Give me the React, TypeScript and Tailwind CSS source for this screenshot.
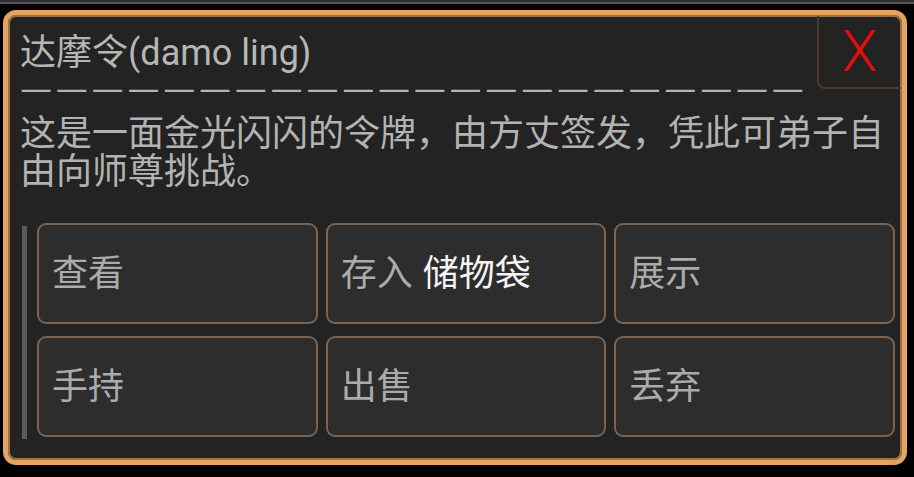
import React from "react";

type Action = { label: string; extra?: string };

const actions: Action[] = [
  { label: "查看" },
  { label: "存入", extra: "储物袋" },
  { label: "展示" },
  { label: "手持" },
  { label: "出售" },
  { label: "丢弃" },
];

const ItemButton = ({ action }: { action: Action }) => (
  <button className="h-[101px] flex items-center px-[13px] bg-[#2d2d2d] border-2 border-[#7b6351] rounded-[9px] text-[36px] leading-none text-[#ababab] text-left">
    <span>{action.label}</span>
    {action.extra && <span className="ml-[10px] text-[#f4f4f4]">{action.extra}</span>}
  </button>
);

const App = () => {
  return (
    <div
      className="w-[914px] h-[477px] bg-black flex flex-col overflow-hidden"
      style={{ fontFamily: 'Roboto, "Noto Sans CJK SC", sans-serif' }}
    >
      {/* status strip at the very top */}
      <div className="h-[2px] bg-[#2e2e2e]" />
      <div className="h-[2px] bg-[#555555]" />

      <div className="ml-[3px] mt-[6px] w-[904px] h-[455px] rounded-[13px] border-[5px] border-[#e2a45f] bg-[#232323] shadow-[inset_0_0_0_2px_#9a7148] relative">
        {/* close button */}
        <button className="absolute top-[1px] right-[1px] w-[84px] h-[73px] border-l-2 border-b-2 border-[#4b3b2e] rounded-bl-[8px] flex items-center justify-center text-[#e30f0f] text-[58px] font-light leading-none pb-[2px]">
          X
        </button>

        <div className="pl-[12px] pt-[16px] pr-[11px]">
          <h1 className="text-[36px] leading-[44px] text-[#b6b6b6] font-normal">
            达摩令(damo ling)
          </h1>
          {/* separator row: each dash kept in its own box so the font can't merge them */}
          <div
            className="flex text-[36px] leading-[24px] text-[#b3b3b3] -mt-[2px]"
            style={{ fontFamily: '"Noto Sans CJK SC", sans-serif' }}
          >
            {Array.from({ length: 22 }).map((_, i) => (
              <span key={i} className="inline-block w-[35.8px] shrink-0">
                —
              </span>
            ))}
          </div>
          <p className="mt-[18px] text-[36px] leading-[38px] text-[#b3b3b3] pr-[6px]">
            这是一面金光闪闪的令牌，由方丈签发，凭此可弟子自由向师尊挑战。
          </p>
        </div>

        <div className="flex mt-[32px] pl-[14px] pr-[7px]">
          <div className="w-[5px] mt-[3px] mb-[-2px] bg-[#5b5b5b]" />
          <div className="flex-1 ml-[10px] grid grid-cols-3 gap-x-[8px] gap-y-[12px]">
            {actions.map((a) => (
              <ItemButton key={a.label} action={a} />
            ))}
          </div>
        </div>
      </div>
    </div>
  );
};

export default App;
